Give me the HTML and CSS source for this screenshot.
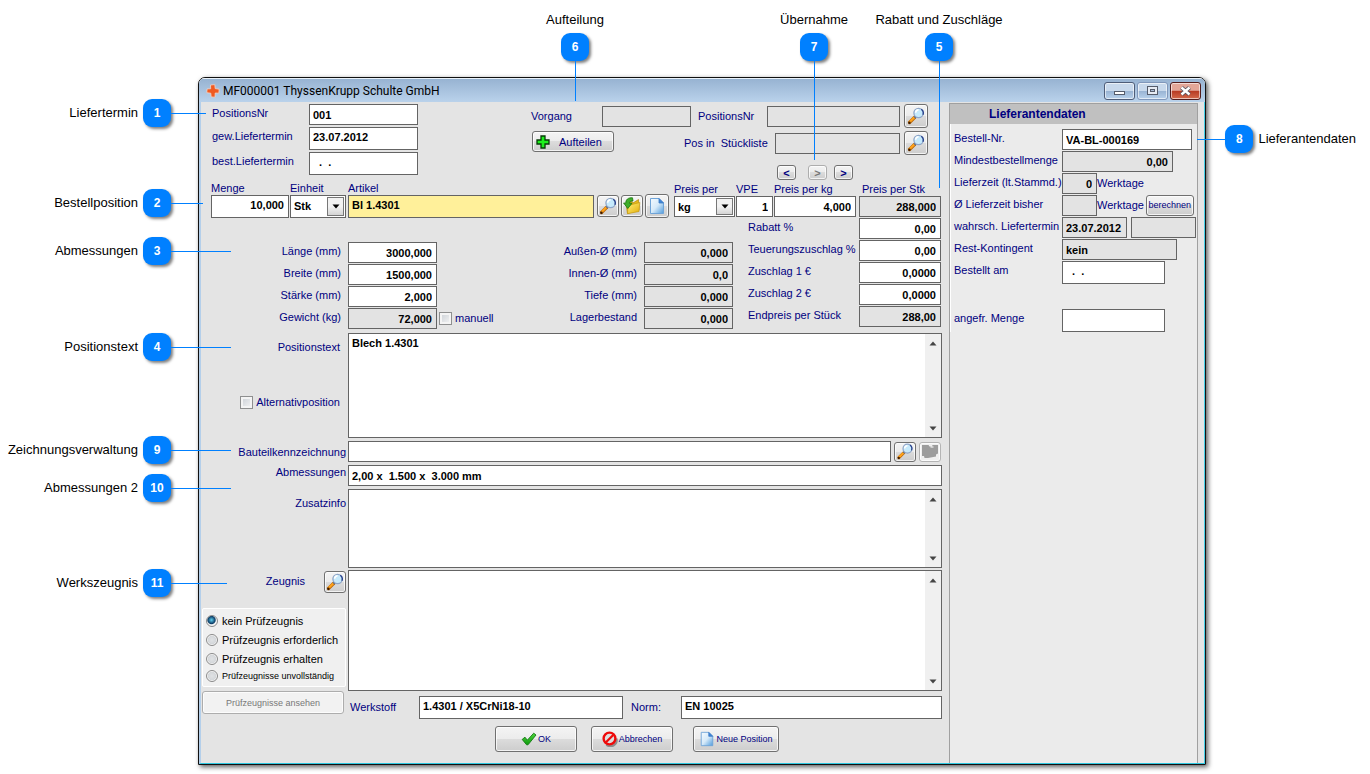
FILE: index.html
```html
<!DOCTYPE html>
<html lang="de">
<head>
<meta charset="utf-8">
<title>MF000001 ThyssenKrupp Schulte GmbH</title>
<link rel="stylesheet" href="styles.css">
</head>
<body>
<svg class="sprite" width="0" height="0" aria-hidden="true">
  <defs>
    <linearGradient id="g-page" x1="0" y1="0" x2="1" y2="1"><stop offset="0" stop-color="#f4faff"/><stop offset="0.5" stop-color="#d6eaf9"/><stop offset="1" stop-color="#4f9bdc"/></linearGradient>
    <linearGradient id="g-folder" x1="0" y1="0" x2="1" y2="1"><stop offset="0" stop-color="#fff27a"/><stop offset="1" stop-color="#e3ac08"/></linearGradient>
    <linearGradient id="g-check" x1="0" y1="0" x2="0" y2="1"><stop offset="0" stop-color="#4fd63c"/><stop offset="1" stop-color="#0e9a0e"/></linearGradient>
    <symbol id="i-lens" viewBox="0 0 18 18">
      <path d="M2.500 15.500 8 10" stroke="#b8660c" stroke-width="3.200" stroke-linecap="round"/>
      <path d="M2.800 14.800 8 9.800" stroke="#ffa31a" stroke-width="2.200" stroke-linecap="round"/>
      <circle cx="2.400" cy="15.800" r="1.200" fill="#3a1c04"/>
      <path d="M7.400 10.600 8.600 9.400" stroke="#5c6a80" stroke-width="2.400"/>
      <circle cx="11.600" cy="6" r="4.700" fill="#c6eafc" stroke="#8fa6c8" stroke-width="1.300"/>
      <path d="M14.300 2.200a4.700 4.700 0 0 1 1.600 5.600" fill="none" stroke="#27408c" stroke-width="1.300"/>
      <path d="M8.600 5.800a3.200 3.200 0 0 1 3-3" fill="none" stroke="#fff" stroke-width="1.600"/>
    </symbol>
    <symbol id="i-page" viewBox="0 0 16 18">
      <path d="M1.500 1.500H10L14.500 6V16.500H1.500Z" fill="url(#g-page)" stroke="#6fa4d8"/>
      <path d="M10 1.500V6H14.500Z" fill="#3f86d6" stroke="#3a78c4" stroke-width=".8"/>
    </symbol>
    <symbol id="i-folder" viewBox="0 0 18 18">
      <path d="M3 6 9 4.500 10 6 15.500 2.500 16 13 4.500 16.500Z" fill="#e6b91c" stroke="#b08408" stroke-width=".7"/>
      <path d="M5 8.500 16.800 5.500 16 14.500 4.500 16.700Z" fill="url(#g-folder)" stroke="#c69a10" stroke-width=".7"/>
      <path d="M9.500 .8C5 .4 2.600 2.800 2.800 6.200L.6 6 4.800 11.500 9 6.200 6.600 6.300C6.600 4.700 7.500 3.800 10 4Z" fill="#3fae2a" stroke="#19750f" stroke-width=".8"/>
    </symbol>
    <symbol id="i-plus" viewBox="0 0 14 14">
      <path d="M5 1H9V5H13V9H9V13H5V9H1V5H5Z" fill="#1df01d" stroke="#063c06" stroke-width="1.300"/>
    </symbol>
    <symbol id="i-logo" viewBox="0 0 14 14">
      <path d="M4.500 1 8.800 .6 9.200 4.600 13.200 5.200 12.800 9.200 9.200 9 9 13.200 5.200 12.900 4.800 9.200 .8 8.700 1.100 4.900 4.700 4.800Z" fill="#f05a22" stroke="#f3d5c8" stroke-width=".8"/>
    </symbol>
    <symbol id="i-check" viewBox="0 0 16 14">
      <path d="M1.200 7.400 4 5.200 6.300 8.200 12.700 1.200 15 3 7 12.800 5.600 12.800Z" fill="url(#g-check)" stroke="#127a12" stroke-width=".9"/>
    </symbol>
    <symbol id="i-stop" viewBox="0 0 16 16">
      <path d="M4.500 13.500a6 6 0 0 0 9.800-6" fill="none" stroke="#8c8c8c" stroke-width="2.400"/>
      <circle cx="7.500" cy="7.500" r="5.900" fill="#dedede" stroke="#ee0a0a" stroke-width="2.400"/>
      <path d="M4 11.200 11.200 4" stroke="#ee0a0a" stroke-width="2.200"/>
    </symbol>
    <symbol id="i-part" viewBox="0 0 18 16">
      <path d="M1 1.500H7.500L8.500 3H11L11.500 1.500H17V10L15 11V13L7 14.500H3.500L3 12.500H1Z" fill="#9c9c9c"/>
      <path d="M9.500 3.500H12.500" stroke="#fff"/>
    </symbol>
    <symbol id="i-up" viewBox="0 0 8 5"><path d="M4 .5 7.500 4.500H.5Z" fill="#444"/></symbol>
    <symbol id="i-down" viewBox="0 0 8 5"><path d="M.5 .5H7.500L4 4.500Z" fill="#444"/></symbol>
    <symbol id="i-drop" viewBox="0 0 8 5"><path d="M.5 .5H7.500L4 4.500Z" fill="#000"/></symbol>
  </defs>
</svg>

<div class="sheet">
  <section class="window">
    <header class="titlebar">
      <svg class="logo"><use href="#i-logo"/></svg>
      <h1 class="title">MF000001 ThyssenKrupp Schulte GmbH</h1>
      <div class="window-buttons">
        <button class="wbtn" aria-label="Minimieren"><svg viewBox="0 0 29 16"><rect x="9.500" y="8.500" width="10" height="3" fill="#fff" stroke="#555c6b"/></svg></button>
        <button class="wbtn wbtn-soft" aria-label="Maximieren"><svg viewBox="0 0 29 16"><rect x="9.500" y="3.500" width="10" height="8" fill="#e6ebf3" stroke="#555c6b"/><rect x="12.500" y="6.500" width="4" height="2" fill="#a9bcd6" stroke="#555c6b"/></svg></button>
        <button class="wbtn wbtn-close" aria-label="Schließen"><svg viewBox="0 0 29 16"><path d="M10.500 4.500 18.500 11.500M18.500 4.500 10.500 11.500" stroke="#54525e" stroke-width="4.200"/><path d="M10.500 4.500 18.500 11.500M18.500 4.500 10.500 11.500" stroke="#fff" stroke-width="2.400"/></svg></button>
      </div>
    </header>

    <div class="body">
      <form class="main">
        <div class="head">
          <div class="dates">
            <label for="posnr">PositionsNr</label><input class="field" id="posnr" value="001">
            <label for="gew">gew.Liefertermin</label><input class="field high" id="gew" value="23.07.2012">
            <label for="best">best.Liefertermin</label><input class="field high" id="best" value="  .  .">
          </div>
          <div class="split">
            <div class="split-row">
              <label class="w-vorgang" for="vorgang">Vorgang</label><input class="field ro w-89" id="vorgang" readonly>
              <label class="w-posnr" for="posnr2">PositionsNr</label><input class="field ro w-133" id="posnr2" readonly>
              <button type="button" class="btn icon-btn" aria-label="Position suchen"><svg><use href="#i-lens"/></svg></button>
            </div>
            <div class="split-row">
              <button type="button" class="btn split-btn"><svg><use href="#i-plus"/></svg><span>Aufteilen</span></button>
              <label class="w-list" for="liste">Pos in&nbsp; Stückliste</label><input class="field ro w-125" id="liste" readonly>
              <button type="button" class="btn icon-btn" aria-label="Stückliste suchen"><svg><use href="#i-lens"/></svg></button>
            </div>
            <div class="steps">
              <button type="button" class="btn step">&lt;</button>
              <button type="button" class="btn step step-off" disabled>&gt;</button>
              <button type="button" class="btn step">&gt;</button>
            </div>
          </div>
        </div>

        <div class="item">
          <div class="col w-78"><label for="menge">Menge</label><input class="field high num" id="menge" value="10,000"></div>
          <div class="col w-56"><label for="einheit">Einheit</label><div class="pick"><select class="field" id="einheit"><option>Stk</option></select><span class="arrow"><svg><use href="#i-drop"/></svg></span></div></div>
          <div class="col grow"><label for="artikel">Artikel</label><input class="field high yellow" id="artikel" value="Bl 1.4301"></div>
          <div class="tools">
            <button type="button" class="btn tool" aria-label="Artikel suchen"><svg><use href="#i-lens"/></svg></button>
            <button type="button" class="btn tool" aria-label="Artikel öffnen"><svg><use href="#i-folder"/></svg></button>
            <button type="button" class="btn icon-btn" aria-label="Neuer Artikel"><svg><use href="#i-page"/></svg></button>
          </div>
          <div class="price">
            <div class="col w-61"><label for="per">Preis per</label><div class="pick"><select class="field" id="per"><option>kg</option></select><span class="arrow"><svg><use href="#i-drop"/></svg></span></div></div>
            <div class="col w-37"><label for="vpe">VPE</label><input class="field num" id="vpe" value="1"></div>
            <div class="col w-82"><label for="pkg">Preis per kg</label><input class="field num" id="pkg" value="4,000"></div>
            <div class="col w-82"><label class="inset" for="pstk">Preis per Stk</label><input class="field num ro" id="pstk" value="288,000" readonly></div>
          </div>
        </div>

        <div class="measures">
          <div class="grid dims">
            <label for="l">Länge (mm)</label><input class="field num" id="l" value="3000,000">
            <label for="b">Breite (mm)</label><input class="field num" id="b" value="1500,000">
            <label for="s">Stärke (mm)</label><input class="field num" id="s" value="2,000">
            <label for="g">Gewicht (kg)</label><input class="field num ro" id="g" value="72,000" readonly>
          </div>
          <label class="check manual"><input type="checkbox">manuell</label>
          <div class="grid dims-2">
            <label for="ad">Außen-Ø (mm)</label><input class="field num ro" id="ad" value="0,000" readonly>
            <label for="id">Innen-Ø (mm)</label><input class="field num ro" id="id" value="0,0" readonly>
            <label for="t">Tiefe (mm)</label><input class="field num ro" id="t" value="0,000" readonly>
            <label for="lb">Lagerbestand</label><input class="field num ro" id="lb" value="0,000" readonly>
          </div>
          <div class="grid extras">
            <label for="rab">Rabatt %</label><input class="field num" id="rab" value="0,00">
            <label for="teu">Teuerungszuschlag %</label><input class="field num" id="teu" value="0,00">
            <label for="z1">Zuschlag 1 €</label><input class="field num" id="z1" value="0,0000">
            <label for="z2">Zuschlag 2 €</label><input class="field num" id="z2" value="0,0000">
            <label for="end">Endpreis per Stück</label><input class="field num ro" id="end" value="288,00" readonly>
          </div>
        </div>

        <div class="line text-line">
          <div class="side">
            <label for="ptext">Positionstext</label>
            <label class="check"><input type="checkbox">Alternativposition</label>
          </div>
          <div class="memo memo-text"><textarea id="ptext">Blech 1.4301</textarea><div class="bar"><svg><use href="#i-up"/></svg><svg><use href="#i-down"/></svg></div></div>
        </div>
        <div class="line part-line">
          <label class="side" for="teil">Bauteilkennzeichnung</label><input class="field grow" id="teil">
          <button type="button" class="btn small-tool" aria-label="Bauteil suchen"><svg><use href="#i-lens"/></svg></button>
          <button type="button" class="btn small-tool off" aria-label="Zeichnung" disabled><svg><use href="#i-part"/></svg></button>
        </div>
        <div class="line size-line">
          <label class="side" for="abm">Abmessungen</label><input class="field grow" id="abm" value="2,00 x  1.500 x  3.000 mm">
        </div>
        <div class="line info-line">
          <label class="side" for="info">Zusatzinfo</label>
          <div class="memo memo-info"><textarea id="info"></textarea><div class="bar"><svg><use href="#i-up"/></svg><svg><use href="#i-down"/></svg></div></div>
        </div>

        <div class="cert">
          <div class="cert-side">
            <div class="cert-head"><label for="zeug">Zeugnis</label><button type="button" class="btn tool" aria-label="Zeugnis suchen"><svg><use href="#i-lens"/></svg></button></div>
            <fieldset class="radios">
              <label><input type="radio" name="pz" checked>kein Prüfzeugnis</label>
              <label><input type="radio" name="pz">Prüfzeugnis erforderlich</label>
              <label><input type="radio" name="pz">Prüfzeugnis erhalten</label>
              <label class="tight"><input type="radio" name="pz">Prüfzeugnisse unvollständig</label>
            </fieldset>
            <button type="button" class="btn view-btn" disabled>Prüfzeugnisse ansehen</button>
          </div>
          <div class="cert-main">
            <div class="memo memo-cert"><textarea id="zeug"></textarea><div class="bar"><svg><use href="#i-up"/></svg><svg><use href="#i-down"/></svg></div></div>
            <div class="material">
              <label class="w-werk" for="werk">Werkstoff</label><input class="field high w-204" id="werk" value="1.4301 / X5CrNi18-10">
              <label class="w-norm" for="norm">Norm:</label><input class="field high grow" id="norm" value="EN 10025">
            </div>
            <div class="actions">
              <button type="button" class="btn action"><svg><use href="#i-check"/></svg>OK</button>
              <button type="button" class="btn action"><svg><use href="#i-stop"/></svg>Abbrechen</button>
              <button type="button" class="btn action action-new"><svg><use href="#i-page"/></svg>Neue Position</button>
            </div>
          </div>
        </div>
      </form>

      <aside class="supplier">
        <h2>Lieferantendaten</h2>
        <div class="facts">
          <label for="bnr">Bestell-Nr.</label><div><input class="field w-130" id="bnr" value="VA-BL-000169"></div>
          <label for="mind">Mindestbestellmenge</label><div><input class="field num ro w-111" id="mind" value="0,00" readonly></div>
          <label for="lz">Lieferzeit (lt.Stammd.)</label><div><input class="field num ro w-35" id="lz" value="0" readonly><span>Werktage</span></div>
          <label for="lzb">Ø Lieferzeit bisher</label><div><input class="field num ro w-35" id="lzb" readonly><span>Werktage</span><button type="button" class="btn calc">berechnen</button></div>
          <label for="wl">wahrsch. Liefertermin</label><div><input class="field ro w-65" id="wl" value="23.07.2012" readonly><input class="field ro w-65 second" aria-label="Woche" readonly></div>
          <label for="rk">Rest-Kontingent</label><div><input class="field ro w-115" id="rk" value="kein" readonly></div>
          <label for="ba">Bestellt am</label><div><input class="field high w-103" id="ba" value="  .  ."></div>
          <label class="apart" for="am">angefr. Menge</label><div class="apart"><input class="field high w-103" id="am"></div>
        </div>
      </aside>
    </div>
  </section>

  <div class="note left n1"><span>Liefertermin</span><b>1</b><i></i></div>
  <div class="note left n2"><span>Bestellposition</span><b>2</b><i></i></div>
  <div class="note left n3"><span>Abmessungen</span><b>3</b><i></i></div>
  <div class="note left n4"><span>Positionstext</span><b>4</b><i></i></div>
  <div class="note left n9"><span>Zeichnungsverwaltung</span><b>9</b><i></i></div>
  <div class="note left n10"><span>Abmessungen 2</span><b>10</b><i></i></div>
  <div class="note left n11"><span>Werkszeugnis</span><b>11</b><i></i></div>
  <div class="note top n6"><span>Aufteilung</span><b>6</b><i></i></div>
  <div class="note top n7"><span>Übernahme</span><b>7</b><i></i></div>
  <div class="note top n5"><span>Rabatt und Zuschläge</span><b>5</b><i></i></div>
  <div class="note right n8"><i></i><b>8</b><span>Lieferantendaten</span></div>
</div>
</body>
</html>
```
FILE: styles.css
```css
* { box-sizing: border-box; }

body {
  margin: 0;
  background: #fff;
  color: #000080;
  font: 11px/14px "Liberation Sans", Arial, sans-serif;
}

.sprite { position: absolute; }
svg { display: block; fill: none; }
input, select, textarea, button { font: inherit; margin: 0; }

.sheet {
  position: relative;
  min-width: 1340px;
  padding: 77px 164px 8px 198px;
}

/* Window frame */
.window {
  border: 1px solid #111;
  border-radius: 7px 7px 0 0;
  box-shadow: 2px 2px 5px rgba(0, 0, 0, .65);
  overflow: hidden;
}
.titlebar {
  display: flex;
  align-items: center;
  height: 24px;
  padding: 0 4px 0 7px;
  border-top: 1px solid #eaf3fb;
  background: linear-gradient(#97b3d2, #bad2eb);
}
.logo { width: 14px; height: 14px; }
.title {
  flex: 1;
  margin: 0 0 0 3px;
  color: #000;
  font: 12px/18px Roboto, sans-serif;
}
.window-buttons { display: flex; gap: 2px; }
.wbtn {
  width: 31px;
  height: 18px;
  padding: 0;
  border: 1px solid #4e5d78;
  border-radius: 3px;
  background: linear-gradient(#c8d9ec 0 48%, #98b3d3 50%, #b9d2ec);
  box-shadow: inset 0 0 0 1px rgba(255, 255, 255, .6);
}
.wbtn-soft { border-color: #8097ba; }
.wbtn-close { border-color: #521c1c; background: linear-gradient(#e3a698 0 46%, #b73a22 50%, #d46a4c); }

.body {
  display: flex;
  padding-right: 6px;
  border-left: 2px solid #b4cfea;
  border-right: 1px solid #45cfe6;
  border-bottom: 1px solid #2cc8e0;
  background: #e4e4e4;
}
.main { flex: 1; min-width: 0; padding: 2px 7px 11px 0; }

/* Controls */
.field {
  display: block;
  min-width: 0;
  width: 100%;
  height: 21px;
  padding: 0 3px;
  border: 1px solid #646464;
  border-radius: 0;
  background: #fff;
  color: #000;
  font-weight: bold;
  white-space: pre;
  appearance: none;
  outline: 0;
}
.high { height: 23px; padding-bottom: 3px; }
.num { text-align: right; padding-right: 4px; }
.ro { background: #e3e3e3; }
.yellow { background: #fff09a; }
.grow { flex: 1; }
.btn {
  display: flex;
  align-items: center;
  justify-content: center;
  flex: none;
  padding: 0;
  border: 1px solid #707070;
  border-radius: 3px;
  background: linear-gradient(#f4f4f4, #ececec 48%, #dcdcdc 50%, #cdcdcd);
  box-shadow: inset 0 0 0 1px rgba(255, 255, 255, .75);
  color: #000080;
}
.icon-btn { width: 24px; height: 24px; }
.icon-btn svg { width: 18px; height: 18px; }
.tool { width: 22px; height: 22px; }
.tool svg { width: 18px; height: 18px; }
.small-tool { width: 22px; height: 20px; }
.small-tool svg { width: 18px; height: 17px; }
.off { border-color: #b4b4b4; background: #efefef; }
.pick { position: relative; }
.arrow {
  position: absolute;
  top: 2px;
  right: 2px;
  bottom: 2px;
  display: flex;
  align-items: center;
  justify-content: center;
  width: 17px;
  border: 1px solid #777;
  background: linear-gradient(#f2f2f2 50%, #d4d4d4);
  pointer-events: none;
}
.arrow svg { width: 8px; height: 5px; }
.check { display: flex; align-items: center; gap: 3px; }
.check input {
  width: 13px;
  height: 13px;
  appearance: none;
  border: 1px solid #8e8f8f;
  background: linear-gradient(135deg, #c9ced4, #f6f6f6);
  box-shadow: inset 0 0 0 2px #f4f4f4;
}

.w-35 { width: 35px; }
.w-37 { width: 37px; }
.w-56 { width: 56px; }
.w-61 { width: 61px; }
.w-65 { width: 65px; }
.w-78 { width: 78px; }
.w-82 { width: 82px; }
.w-89 { width: 89px; }
.w-103 { width: 103px; }
.w-111 { width: 111px; }
.w-115 { width: 115px; }
.w-125 { width: 125px; }
.w-130 { width: 130px; }
.w-133 { width: 133px; }
.w-204 { width: 204px; }

/* Dates and splitting */
.head { display: flex; justify-content: space-between; height: 78px; padding: 0 14px 0 11px; }
.dates {
  display: grid;
  grid-template-columns: 97px 109px;
  grid-template-rows: 21px 23px 23px;
  gap: 2px 0;
  align-content: start;
  line-height: 19px;
}
.split { display: flex; flex-direction: column; gap: 3px; }
.split-row { display: flex; align-items: center; height: 24px; }
.split-row .icon-btn { margin-left: 4px; }
.w-vorgang { width: 71px; }
.w-posnr { width: 76px; padding-left: 7px; }
.w-list { width: 91px; margin-left: auto; }
.split-btn {
  align-self: flex-start;
  justify-content: flex-start;
  width: 82px;
  height: 21px;
  gap: 9px;
  margin-left: 1px;
  padding-left: 3px;
}
.split-btn svg { width: 14px; height: 14px; }
.steps { display: flex; justify-content: flex-end; padding: 7px 75px 0 0; }
.step { width: 19px; height: 15px; font-weight: bold; line-height: 12px; }
.step + .step { margin-left: 12px; }
.step-off + .step { margin-left: 7px; }
.step-off { border-color: #adadad; color: #777; }

/* Article row */
.item { display: flex; height: 36px; padding: 0 1px 0 10px; }
.item .col { display: flex; flex-direction: column; }
.item > .col { margin-right: 2px; line-height: 13px; }
.item > .w-78 { margin-right: 1px; }
.item > .w-56 .field { height: 23px; }
.tools { display: flex; align-items: center; gap: 2px; height: 24px; margin: 12px 5px 0 1px; }
.price { display: flex; line-height: 14px; }
.price .col + .col { margin-left: 1px; }
.price .w-82 + .w-82 { margin-left: 3px; }
.price label { white-space: nowrap; }
.price .inset { padding-left: 3px; }

/* Measures */
.measures { display: flex; align-items: flex-start; padding-right: 1px; }
.grid { display: grid; grid-auto-rows: 21px; gap: 1px 7px; line-height: 19px; }
.dims { grid-template-columns: 140px 89px; padding-top: 24px; text-align: right; }
.manual { margin: 93px auto 0 2px; }
.dims-2 { grid-template-columns: 90px 89px; padding-top: 24px; text-align: right; }
.extras { grid-template-columns: 111px 82px; column-gap: 0; margin-left: 15px; white-space: nowrap; }

/* Text rows */
.line { display: flex; }
.side { flex: none; width: 147px; padding-right: 2px; text-align: right; }
.text-line { margin-top: 4px; }
.text-line .side { display: flex; flex-direction: column; align-items: flex-end; gap: 41px; padding: 7px 8px 0 0; }
.memo {
  display: flex;
  flex: 1;
  border: 1px solid #646464;
  background: #fff;
}
.memo textarea {
  flex: 1;
  padding: 2px 3px;
  border: 0;
  outline: 0;
  resize: none;
  background: none;
  color: #000;
  font-weight: bold;
}
.bar {
  display: flex;
  flex-direction: column;
  justify-content: space-between;
  align-items: center;
  width: 16px;
  padding: 7px 0 6px;
  background: #f0f0f0;
}
.bar svg { width: 8px; height: 5px; }
.memo-text { height: 105px; }
.part-line { margin-top: 3px; padding-right: 1px; align-items: center; line-height: 18px; }
.part-line .small-tool { margin-left: 3px; }
.size-line { margin-top: 3px; }
.info-line { margin-top: 3px; }
.info-line .side { padding-top: 7px; }
.memo-info { height: 79px; }

/* Certificates */
.cert { display: flex; margin-top: 2px; }
.cert-side { flex: none; width: 147px; padding: 1px 2px 0 1px; }
.cert-head { display: flex; justify-content: flex-end; gap: 19px; line-height: 20px; }
.radios {
  min-width: 0;
  margin: 15px 0 4px;
  padding: 2px 3px 3px;
  border: 1px solid #fff;
  border-radius: 2px;
  background: #f0f0f0;
  color: #000;
  white-space: nowrap;
}
.radios label { display: flex; align-items: center; gap: 4px; height: 19px; }
.radios .tight { height: 15px; font-size: 9px; }
.radios input {
  flex: none;
  width: 12px;
  height: 12px;
  appearance: none;
  border: 1px solid #8a8a8a;
  border-radius: 50%;
  background: radial-gradient(#e0e2e4, #d4d7da 55%, #f4f4f4 65%);
}
.radios input:checked { background: radial-gradient(circle at 45% 40%, #5fd0f0 0, #0b3c66 45%, #f4f4f4 58%); }
.view-btn {
  width: 142px;
  height: 23px;
  border-color: #adadad;
  background: #f2f2f2;
  color: #787878;
  font-size: 9px;
}
.cert-main { flex: 1; min-width: 0; }
.memo-cert { height: 121px; }
.material { display: flex; margin-top: 5px; line-height: 22px; }
.w-werk { width: 71px; padding-left: 2px; }
.w-norm { width: 58px; padding-left: 8px; }
.actions { display: flex; justify-content: center; gap: 14px; padding: 7px 16px 0 0; }
.action { width: 82px; height: 26px; font-size: 9px; gap: 1px; }
.action svg { width: 16px; height: 16px; }
.action-new { width: 86px; margin-left: 6px; }

/* Supplier column */
.supplier {
  flex: none;
  width: 249px;
  margin-top: 1px;
  border: solid #a0a0a0;
  border-width: 1px 1px 0;
  background: #ebebeb;
  white-space: nowrap;
}
.supplier h2 {
  margin: 0;
  padding-left: 39px;
  background: #c0c0c0;
  font: bold 12px/20px "Liberation Sans", Arial, sans-serif;
}
.facts {
  display: grid;
  grid-template-columns: 108px 1fr;
  gap: 1px 0;
  padding: 5px 0 0 3px;
  border-left: 1px solid #fff;
  line-height: 19px;
}
.facts div { display: flex; align-items: center; min-height: 21px; }
.facts .field { flex: none; }
.facts .second { margin-left: 4px; }
.facts .apart { margin-top: 24px; }
.calc { width: 48px; height: 21px; margin-left: 2px; font-size: 9px; }

/* Numbered pins over the window */
.note {
  position: absolute;
  display: flex;
  align-items: center;
  color: #000;
  font-size: 13px;
  line-height: 16px;
  white-space: nowrap;
}
.note b {
  flex: none;
  width: 28px;
  height: 28px;
  border-radius: 9px;
  background: #0080ff;
  box-shadow: 2px 2px 3px rgba(0, 0, 0, .5);
  color: #fff;
  font-size: 12px;
  line-height: 28px;
  text-align: center;
}
.note i { flex: none; background: #0080ff; }
.left { left: 0; }
.left span { width: 138px; margin-right: 5px; text-align: right; }
.left i { width: 60px; height: 1px; }
.right i { width: 28px; height: 1px; }
.right span { margin-left: 5px; }
.top { top: 12px; flex-direction: column; width: 140px; }
.top span { margin-bottom: 5px; }
.top i { width: 1px; }
.n1 { top: 99px; }
.n1 i { width: 35px; }
.n2 { top: 189px; }
.n2 i { width: 32px; }
.n3 { top: 237px; }
.n4 { top: 333px; }
.n9 { top: 436px; }
.n10 { top: 474px; }
.n11 { top: 569px; }
.n11 i { width: 56px; }
.n6 { right: 725px; }
.n6 i { height: 40px; }
.n7 { right: 486px; }
.n7 i { height: 99px; }
.n5 { right: 361px; }
.n5 i { height: 127px; }
.n8 { top: 125px; right: 14px; }
```
